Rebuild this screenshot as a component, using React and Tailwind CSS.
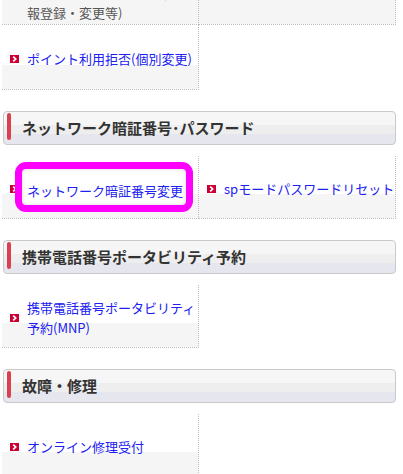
import React from 'react';

const Arrow = () => (
  <svg width="9" height="8" viewBox="0 0 9 8" className="shrink-0 block">
    <rect width="9" height="8" fill="#cc0033" />
    <path d="M3.2 1.6 5.7 4 3.2 6.4" stroke="#fff" strokeWidth="1.7" fill="none" />
  </svg>
);

const cellBase =
  'w-[197px] flex items-center gap-2 pl-2 border-r border-b border-dotted border-[#bdbdbd] bg-[linear-gradient(to_bottom,#ffffff_calc(100%_-_24px),#f5f5f5_calc(100%_-_24px))]';

const Cell = ({ height, children, extra = 'pt-1' }) => (
  <div className={`${cellBase} ${height} ${extra}`}>{children}</div>
);

const Link = ({ children, nowrap = false }) => (
  <span className={`text-[13px] leading-[20px] text-[#2020f0] ${nowrap ? 'whitespace-nowrap' : ''}`}>{children}</span>
);

const Heading = ({ children }) => (
  <div className="mt-[21px] ml-px w-[393px] h-[34px] flex items-start rounded-[4px] border border-[#c9c9c9] bg-[linear-gradient(to_bottom,#f6f6f6_0%,#f6f6f6_42%,#eeeeee_42%,#eeeeee_70%,#e6e6ee_70%,#e6e6ee_100%)]">
    <div className="ml-[3px] mt-px w-[4px] h-[27px] rounded-full bg-[#d8414d]" />
    <h2 className="ml-[11px] self-center text-[15px] leading-[20px] font-bold text-[#333333]">{children}</h2>
  </div>
);

export default function App() {
  return (
    <div className="w-[403px] h-[474px] overflow-hidden bg-white font-['Noto_Sans_CJK_JP','Noto_Sans',sans-serif]">
      <div className="-mt-[45px] pl-[2px]">
        {/* row cut off by scroll */}
        <div className="flex">
          <Cell height="h-[70px]" extra="pt-[7px]">
            <Arrow />
            <div className="text-[13px] leading-[20px]">
              <span className="text-[#2020f0]">ご契約内容確認・変更</span>
              <br />
              <span className="text-[#555555]">(ご利用明細登録・利用者情報登録・変更等)</span>
            </div>
          </Cell>
          <Cell height="h-[70px]" extra="pt-[6px]">
            <Arrow />
            <Link>ポイント利用拒否(一括変更)</Link>
          </Cell>
        </div>
        <div className="flex">
          <Cell height="h-[65px]">
            <Arrow />
            <Link>ポイント利用拒否(個別変更)</Link>
          </Cell>
        </div>

        <Heading>ネットワーク暗証番号･パスワード</Heading>
        <div className="flex mt-[11px]">
          <Cell height="h-[63px]" extra="pt-1 relative">
            <Arrow />
            <div className="absolute left-[13px] top-[6px] w-[178px] h-[50px] rounded-[11px] border-[7px] border-[#ff00ff] bg-white shadow-[inset_0_0_4px_rgba(0,0,0,0.15)]" />
            <span className="relative">
              <Link>ネットワーク暗証番号変更</Link>
            </span>
          </Cell>
          <Cell height="h-[63px]">
            <Arrow />
            <Link nowrap>spモードパスワードリセット</Link>
          </Cell>
        </div>

        <Heading>携帯電話番号ポータビリティ予約</Heading>
        <div className="flex mt-[11px]">
          <Cell height="h-[63px]">
            <Arrow />
            <Link>携帯電話番号ポータビリティ予約(MNP)</Link>
          </Cell>
        </div>

        <Heading>故障・修理</Heading>
        <div className="flex mt-[11px]">
          <Cell height="h-[63px]">
            <Arrow />
            <Link>オンライン修理受付</Link>
          </Cell>
        </div>
      </div>
    </div>
  );
}
